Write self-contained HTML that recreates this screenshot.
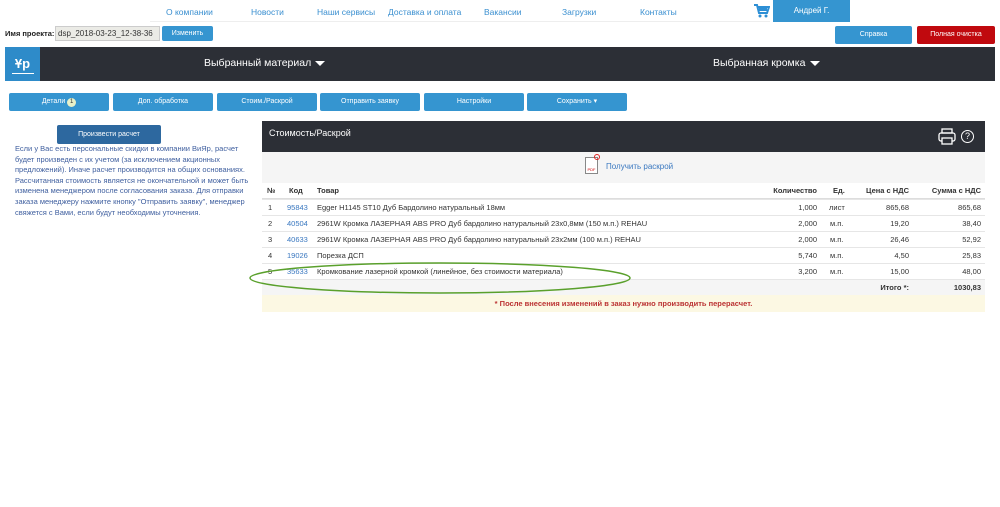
<!DOCTYPE html>
<html><head><meta charset="utf-8"><style>
*{box-sizing:border-box;margin:0;padding:0}
body{width:1000px;height:507px;background:#fff;font-family:"Liberation Sans",Arial,sans-serif;position:relative;overflow:hidden}
.a{position:absolute}
.nav{font-size:8.5px;color:#3a8fd0;top:7px}
.btn{position:absolute;background:#3595d0;color:#fff;font-size:7px;text-align:center;border-radius:2px}
.tb{top:93px;height:18px;line-height:18px;width:100px}
.row{position:absolute;left:262px;width:723px;height:16px;font-size:7.5px;color:#333;line-height:16px;border-top:1px solid #e6e6e6}
.row span{position:absolute}
.l{color:#3a78c0}
</style></head><body>
<div class="a nav" style="left:166px">О компании</div>
<div class="a nav" style="left:251px">Новости</div>
<div class="a nav" style="left:317px">Наши сервисы</div>
<div class="a nav" style="left:388px">Доставка и оплата</div>
<div class="a nav" style="left:484px">Вакансии</div>
<div class="a nav" style="left:562px">Загрузки</div>
<div class="a nav" style="left:640px">Контакты</div>
<div class="a" style="left:150px;top:21px;width:620px;height:1px;background:#eee"></div>
<svg class="a" style="left:753px;top:3px" width="17" height="16" viewBox="0 0 17 16"><path d="M1 2h3l2 8h8l2-6H5" fill="none" stroke="#2d8fd5" stroke-width="2"/><rect x="6" y="5" width="8" height="3" fill="#2d8fd5"/><circle cx="7" cy="13" r="1.5" fill="#2d8fd5"/><circle cx="13" cy="13" r="1.5" fill="#2d8fd5"/></svg>
<div class="btn" style="left:773px;top:0;width:77px;height:22px;line-height:22px;font-size:8px;border-radius:0">Андрей Г.</div>
<div class="a" style="left:5px;top:29px;font-size:7.5px;font-weight:bold;color:#222">Имя проекта:</div>
<div class="a" style="left:55px;top:26px;width:105px;height:15px;background:#ebebe6;border:1px solid #ccc;font-size:8px;line-height:13px;padding-left:2px;color:#333">dsp_2018-03-23_12-38-36</div>
<div class="btn" style="left:162px;top:26px;width:51px;height:15px;line-height:15px">Изменить</div>
<div class="btn" style="left:835px;top:26px;width:77px;height:18px;line-height:18px">Справка</div>
<div class="btn" style="left:917px;top:26px;width:78px;height:18px;line-height:18px;background:#c0090e">Полная очистка</div>
<div class="a" style="left:5px;top:47px;width:990px;height:34px;background:#2c2f36"></div>
<div class="a" style="left:5px;top:47px;width:35px;height:34px;background:#2e8bc9;color:#fff;font-weight:bold;font-size:13px;line-height:34px;text-align:center">Ұр</div>
<div class="a" style="left:12px;top:73px;width:22px;height:1px;background:#fff"></div>
<div class="a" style="left:204px;top:57px;color:#fff;font-size:10.5px">Выбранный материал</div>
<div class="a" style="left:315px;top:61px;border-left:5px solid transparent;border-right:5px solid transparent;border-top:5px solid #fff"></div>
<div class="a" style="left:713px;top:57px;color:#fff;font-size:10.5px">Выбранная кромка</div>
<div class="a" style="left:810px;top:61px;border-left:5px solid transparent;border-right:5px solid transparent;border-top:5px solid #fff"></div>
<div class="btn tb" style="left:9px">Детали <span style="display:inline-block;width:9px;height:9px;border-radius:50%;background:#e8f0c8;color:#333;line-height:9px;font-size:6px">1</span></div>
<div class="btn tb" style="left:113px">Доп. обработка</div>
<div class="btn tb" style="left:217px">Стоим./Раскрой</div>
<div class="btn tb" style="left:320px">Отправить заявку</div>
<div class="btn tb" style="left:424px">Настройки</div>
<div class="btn tb" style="left:527px">Сохранить ▾</div>
<div class="btn" style="left:57px;top:125px;width:104px;height:19px;line-height:19px;background:#2d689f">Произвести расчет</div>
<div class="a" style="left:15px;top:144px;width:245px;font-size:7.5px;line-height:10.6px;color:#3f5f9f">Если у Вас есть персональные скидки в компании ВиЯр, расчет<br>будет произведен с их учетом (за исключением акционных<br>предложений). Иначе расчет производится на общих основаниях.<br>Рассчитанная стоимость является не окончательной и может быть<br>изменена менеджером после согласования заказа. Для отправки<br>заказа менеджеру нажмите кнопку "Отправить заявку", менеджер<br>свяжется с Вами, если будут необходимы уточнения.</div>
<div class="a" style="left:262px;top:121px;width:723px;height:31px;background:#2c2f36"></div>
<div class="a" style="left:269px;top:128px;color:#fff;font-size:9px">Стоимость/Раскрой</div>
<svg class="a" style="left:938px;top:128px" width="18" height="17" viewBox="0 0 18 17"><rect x="4" y="1" width="10" height="4" fill="none" stroke="#fff" stroke-width="1.3"/><rect x="1" y="5" width="16" height="8" rx="2" fill="none" stroke="#fff" stroke-width="1.3"/><rect x="4" y="10" width="10" height="6" fill="#2c2f36" stroke="#fff" stroke-width="1.3"/></svg>
<div class="a" style="left:961px;top:130px;width:13px;height:13px;border:1.3px solid #fff;border-radius:50%;color:#fff;font-size:9px;line-height:11px;text-align:center">?</div>
<div class="a" style="left:262px;top:152px;width:723px;height:31px;background:#f5f5f5"></div>
<div class="a" style="left:585px;top:157px;width:13px;height:17px;background:#fff;border:1px solid #888;font-size:4px;color:#c00;text-align:center;line-height:24px">PDF</div>
<div class="a" style="left:594px;top:154px;width:6px;height:6px;border-radius:50%;border:1px solid #d22"></div>
<div class="a" style="left:606px;top:162px;font-size:8px;color:#3a78c0">Получить раскрой</div>
<div class="row" style="top:183px;font-weight:bold;border-top:none;border-bottom:1px solid #ddd"><span style="left:5px">№</span><span style="left:27px">Код</span><span style="left:55px">Товар</span><span style="right:168px">Количество</span><span style="left:571px">Ед.</span><span style="right:76px">Цена с НДС</span><span style="right:4px">Сумма с НДС</span></div>
<div class="row" style="top:199px"><span style="left:6px">1</span><span class="l" style="left:25px">95843</span><span style="left:55px">Egger H1145 ST10 Дуб Бардолино натуральный 18мм</span><span style="right:168px">1,000</span><span style="left:567px">лист</span><span style="right:76px">865,68</span><span style="right:4px">865,68</span></div>
<div class="row" style="top:215px"><span style="left:6px">2</span><span class="l" style="left:25px">40504</span><span style="left:55px">2961W Кромка ЛАЗЕРНАЯ ABS PRO Дуб бардолино натуральный 23x0,8мм (150 м.п.) REHAU</span><span style="right:168px">2,000</span><span style="left:568px">м.п.</span><span style="right:76px">19,20</span><span style="right:4px">38,40</span></div>
<div class="row" style="top:231px"><span style="left:6px">3</span><span class="l" style="left:25px">40633</span><span style="left:55px">2961W Кромка ЛАЗЕРНАЯ ABS PRO Дуб бардолино натуральный 23x2мм (100 м.п.) REHAU</span><span style="right:168px">2,000</span><span style="left:568px">м.п.</span><span style="right:76px">26,46</span><span style="right:4px">52,92</span></div>
<div class="row" style="top:247px"><span style="left:6px">4</span><span class="l" style="left:25px">19026</span><span style="left:55px">Порезка ДСП</span><span style="right:168px">5,740</span><span style="left:568px">м.п.</span><span style="right:76px">4,50</span><span style="right:4px">25,83</span></div>
<div class="row" style="top:263px"><span style="left:6px">5</span><span class="l" style="left:25px">35633</span><span style="left:55px">Кромкование лазерной кромкой (линейное, без стоимости материала)</span><span style="right:168px">3,200</span><span style="left:568px">м.п.</span><span style="right:76px">15,00</span><span style="right:4px">48,00</span></div>
<div class="row" style="top:279px;background:#f5f5f5;font-weight:bold"><span style="right:76px">Итого *:</span><span style="right:4px">1030,83</span></div>
<div class="a" style="left:262px;top:295px;width:723px;height:17px;background:#fcf8e3;color:#b33;font-size:7.5px;font-weight:bold;text-align:center;line-height:17px">* После внесения изменений в заказ нужно производить перерасчет.</div>
<svg class="a" style="left:0;top:0" width="1000" height="507"><ellipse cx="440" cy="278" rx="190" ry="15" fill="none" stroke="#5aa02c" stroke-width="1.5"/></svg>
</body></html>
